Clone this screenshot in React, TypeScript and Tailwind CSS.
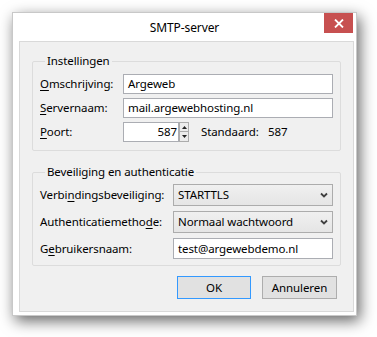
import React from "react";

const font = { fontFamily: '"Noto Sans", "Segoe UI", sans-serif' };

function Chevron() {
  return (
    <svg width="8" height="6" viewBox="0 0 8 6" className="shrink-0">
      <polyline points="1,1.5 4,4.5 7,1.5" fill="none" stroke="#404040" strokeWidth="1.8" />
    </svg>
  );
}

function Select({ value, h }: { value: string; h: string }) {
  return (
    <div
      className={`w-[160px] ${h} flex items-center justify-between border border-[#acacac] bg-gradient-to-b from-[#f0f0f0] to-[#e5e5e5] pl-[4px] pr-[4px] text-black`}
    >
      <span>{value}</span>
      <Chevron />
    </div>
  );
}

function Arrow({ up }: { up?: boolean }) {
  return (
    <svg width="5" height="3" viewBox="0 0 5 3">
      {up ? <polygon points="0,3 5,3 2.5,0" fill="#222" /> : <polygon points="0,0 5,0 2.5,3" fill="#222" />}
    </svg>
  );
}

export default function App() {
  return (
    <div className="min-h-screen bg-white pt-[12px] pl-[12px] text-[11.5px] leading-[16px] tracking-[-0.1px] text-black" style={font}>
      <div className="w-[345px] h-[304px] bg-white border border-[#c8c8c8] flex flex-col shadow-[3px_5px_14px_rgba(0,0,0,0.6)]">
        {/* Title bar */}
        <div className="grid grid-cols-[1fr_auto_1fr] h-[28px]">
          <div />
          <div className="pt-[7px] text-[12px] text-black">SMTP-server</div>
          <div className="flex justify-end pr-[3px]">
            <div className="w-[29px] h-[20px] bg-[#c75050] flex items-center justify-center">
              <svg width="10" height="9" viewBox="0 0 10 9">
                <path d="M1 0.5 L9 8.5 M9 0.5 L1 8.5" stroke="#fff" strokeWidth="1.8" />
              </svg>
            </div>
          </div>
        </div>
        {/* Content panel */}
        <div className="flex-1 ml-[6px] mr-[2px] mb-[3px] border border-[#d9d9d9] bg-[#f0f0f0] pl-[12px] pt-[11px] flex flex-col">
          <fieldset className="w-[309px] border border-[#dcdcdc] rounded-[2px] pl-[7px] pr-[6px] pt-[5px] pb-[8px]">
            <legend className="ml-[5px] px-[2px]">Instellingen</legend>
            <div className="flex flex-col gap-[4px]">
              <div className="flex items-center h-[20px]">
                <div className="w-[83px]">
                  <span className="underline underline-offset-2">O</span>mschrijving:
                </div>
                <div className="w-[210px] h-[20px] bg-white border border-[#abadb3] pl-[4px] flex items-center">Argeweb</div>
              </div>
              <div className="flex items-center h-[20px]">
                <div className="w-[83px]">
                  <span className="underline underline-offset-2">S</span>ervernaam:
                </div>
                <div className="w-[210px] h-[20px] bg-white border border-[#abadb3] pl-[4px] flex items-center">mail.argewebhosting.nl</div>
              </div>
              <div className="flex items-center h-[20px]">
                <div className="w-[83px]">
                  <span className="underline underline-offset-2">P</span>oort:
                </div>
                <div className="w-[56px] h-[20px] bg-white border border-[#abadb3] flex items-center pr-[1px]">
                  <div className="flex-1 text-right">587</div>
                </div>
                <div className="w-[10px] h-[20px] flex flex-col">
                  <div className="h-[10px] border border-[#acacac] bg-[#ececec] flex items-center justify-center">
                    <Arrow up />
                  </div>
                  <div className="h-[10px] border border-[#acacac] border-t-0 bg-[#ececec] flex items-center justify-center">
                    <Arrow />
                  </div>
                </div>
                <div className="ml-[12px] w-[67px]">Standaard:</div>
                <div>587</div>
              </div>
            </div>
          </fieldset>

          <fieldset className="mt-[13px] w-[309px] border border-[#dcdcdc] rounded-[2px] pl-[7px] pr-[6px] pt-[4px] pb-[6px]">
            <legend className="ml-[5px] px-[2px]">Beveiliging en authenticatie</legend>
            <div className="flex flex-col gap-[5px]">
              <div className="flex items-center">
                <div className="w-[133px]">
                  Verbi<span className="underline underline-offset-2">n</span>dingsbeveiliging:
                </div>
                <Select value="STARTTLS" h="h-[22px]" />
              </div>
              <div className="flex items-center">
                <div className="w-[133px]">
                  Authenticatiemetho<span className="underline underline-offset-2">d</span>e:
                </div>
                <Select value="Normaal wachtwoord" h="h-[22px]" />
              </div>
              <div className="flex items-center">
                <div className="w-[133px]">
                  G<span className="underline underline-offset-2">e</span>bruikersnaam:
                </div>
                <div className="w-[160px] h-[21px] bg-white border border-[#abadb3] pl-[4px] flex items-center">test@argewebdemo.nl</div>
              </div>
            </div>
          </fieldset>

          <div className="mt-[10px] w-[305px] flex justify-end gap-[11px]">
            <div className="w-[74px] h-[23px] border border-[#3399ff] bg-[#e1e1e1] flex items-center justify-center">OK</div>
            <div className="w-[75px] h-[23px] border border-[#adadad] bg-[#e1e1e1] flex items-center justify-center">Annuleren</div>
          </div>
        </div>
      </div>
    </div>
  );
}
